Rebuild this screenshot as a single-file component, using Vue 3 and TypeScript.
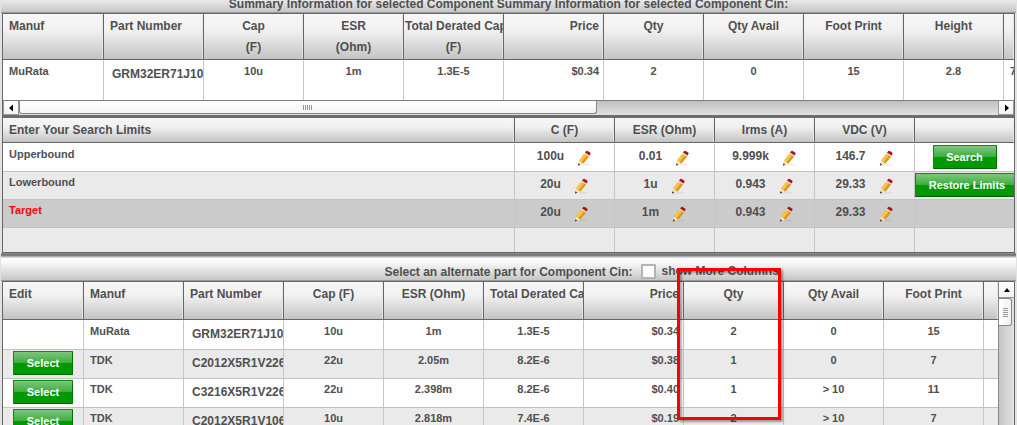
<script setup lang="ts">
import { ref } from 'vue'

type Align = 'left' | 'center' | 'right'

interface Column {
  label: string
  unit?: string
  align: Align
}

interface LimitRow {
  name: string
  values: string[]
  action?: string
  kind?: string
}

const summaryColumns: Column[] = [
  { label: 'Manuf', align: 'left' },
  { label: 'Part Number', align: 'left' },
  { label: 'Cap', unit: '(F)', align: 'center' },
  { label: 'ESR', unit: '(Ohm)', align: 'center' },
  { label: 'Total Derated Cap', unit: '(F)', align: 'center' },
  { label: 'Price', align: 'right' },
  { label: 'Qty', align: 'center' },
  { label: 'Qty Avail', align: 'center' },
  { label: 'Foot Print', align: 'center' },
  { label: 'Height', align: 'center' },
  { label: '', align: 'left' },
]
const summaryRow: string[] = ['MuRata', 'GRM32ER71J10', '10u', '1m', '1.3E-5', '$0.34', '2', '0', '15', '2.8', '7']

const limitColumns: string[] = ['C (F)', 'ESR (Ohm)', 'Irms (A)', 'VDC (V)']
const limitRows: LimitRow[] = [
  { name: 'Upperbound', values: ['100u', '0.01', '9.999k', '146.7'], action: 'Search' },
  { name: 'Lowerbound', values: ['20u', '1u', '0.943', '29.33'], action: 'Restore Limits' },
  { name: 'Target', values: ['20u', '1m', '0.943', '29.33'], kind: 'target' },
]

const partColumns: Column[] = [
  { label: 'Edit', align: 'left' },
  { label: 'Manuf', align: 'left' },
  { label: 'Part Number', align: 'left' },
  { label: 'Cap (F)', align: 'center' },
  { label: 'ESR (Ohm)', align: 'center' },
  { label: 'Total Derated Ca', align: 'center' },
  { label: 'Price', align: 'right' },
  { label: 'Qty', align: 'center' },
  { label: 'Qty Avail', align: 'center' },
  { label: 'Foot Print', align: 'center' },
  { label: '', align: 'left' },
]
const partRows: string[][] = [
  ['', 'MuRata', 'GRM32ER71J10', '10u', '1m', '1.3E-5', '$0.34', '2', '0', '15', ''],
  ['Select', 'TDK', 'C2012X5R1V226', '22u', '2.05m', '8.2E-6', '$0.38', '1', '0', '7', ''],
  ['Select', 'TDK', 'C3216X5R1V226', '22u', '2.398m', '8.2E-6', '$0.40', '1', '> 10', '11', ''],
  ['Select', 'TDK', 'C2012X5R1V106', '10u', '2.818m', '7.4E-6', '$0.19', '2', '> 10', '7', ''],
]

const showMore = ref(false)
</script>

<template>
  <main class="page">
    <section class="panel panel-summary">
      <div class="title">
        <h2 class="title-text">Summary Information for selected Component Summary Information for selected Component Cin:</h2>
      </div>
      <div class="frame">
        <table class="grid summary">
          <colgroup>
            <col v-for="i in 10" :key="i" class="col-std" />
            <col />
          </colgroup>
          <thead>
            <tr>
              <th v-for="(c, i) in summaryColumns" :key="i" :class="[c.align, { tight: c.unit }]">
                {{ c.label }}<template v-if="c.unit"><br />{{ c.unit }}</template>
              </th>
            </tr>
          </thead>
          <tbody>
            <tr>
              <td v-for="(v, i) in summaryRow" :key="i" :class="[summaryColumns[i].align, { part: i === 1 }]">{{ v }}</td>
            </tr>
          </tbody>
        </table>
        <div class="hscroll">
          <button class="arrow" type="button" aria-label="Scroll left">
            <svg width="5" height="8" viewBox="0 0 5 8"><path d="M0 4 4 0.5v7z" /></svg>
          </button>
          <div class="track">
            <div class="thumb"><i v-for="i in 5" :key="i"></i></div>
          </div>
          <button class="arrow" type="button" aria-label="Scroll right">
            <svg width="5" height="8" viewBox="0 0 5 8"><path d="M5 4 1 0.5v7z" /></svg>
          </button>
        </div>
        <table class="grid limits">
          <colgroup>
            <col />
            <col v-for="i in 5" :key="i" class="col-std" />
          </colgroup>
          <thead>
            <tr>
              <th class="left">Enter Your Search Limits</th>
              <th v-for="c in limitColumns" :key="c" class="center">{{ c }}</th>
              <th></th>
            </tr>
          </thead>
          <tbody>
            <tr v-for="row in limitRows" :key="row.name" :class="row.kind">
              <td class="left name">{{ row.name }}</td>
              <td v-for="(v, i) in row.values" :key="i" class="value">
                <div class="editable">
                  <span>{{ v }}</span>
                  <button class="pencil" type="button" :aria-label="`Edit ${row.name} ${limitColumns[i]}`">
                    <svg width="16" height="16" viewBox="0 0 16 16">
                      <path d="M4 15.500h9l1-1.500-6-.5z" fill="#888" opacity=".15" />
                      <path d="M3 10.600 7.300 13.400 4.200 15 2.200 15.600z" fill="#f6e4c4" />
                      <path d="M2.400 13.200 4.300 14.500 2 15.800z" fill="#2c2c2c" />
                      <path d="M3 10.600 8.300 3.400 13 6.400 7.300 13.500z" fill="#f0b62e" />
                      <path d="M5.800 12.500 11.500 5.400 13 6.400 7.300 13.500z" fill="#d7951a" />
                      <path d="M3.600 10.900 8.900 3.900 10.100 4.600 4.800 11.700z" fill="#f9cd55" />
                      <path d="M8.300 3.400 9.400 2 14 5 13 6.400z" fill="#e1e3e6" />
                      <path d="M9 2.500 10.300 1Q10.900.4 11.700.9L14.200 2.600Q14.900 3.200 14.400 4L13.500 5.400z" fill="#ae1220" />
                    </svg>
                  </button>
                </div>
              </td>
              <td class="action">
                <button v-if="row.action" type="button" class="btn" :class="row.action === 'Search' ? 'search' : 'restore'">{{ row.action }}</button>
              </td>
            </tr>
            <tr class="filler">
              <td v-for="i in 6" :key="i"></td>
            </tr>
          </tbody>
        </table>
      </div>
    </section>

    <section class="panel">
      <div class="title">
        <h2 class="title-text">Select an alternate part for Component Cin:</h2>
        <label class="more"><input v-model="showMore" type="checkbox" />show More Columns</label>
      </div>
      <div class="frame split">
        <table class="grid parts">
          <colgroup>
            <col class="col-edit" />
            <col v-for="i in 9" :key="i" class="col-std" />
            <col />
          </colgroup>
          <thead>
            <tr>
              <th v-for="(c, i) in partColumns" :key="i" :class="c.align">{{ c.label }}</th>
            </tr>
          </thead>
          <tbody>
            <tr v-for="(row, r) in partRows" :key="r">
              <td v-for="(v, i) in row" :key="i" :class="i === 0 ? 'action' : [partColumns[i].align, { part: i === 2 }]">
                <button v-if="i === 0 && v" type="button" class="btn select">{{ v }}</button>
                <template v-else>{{ v }}</template>
              </td>
            </tr>
          </tbody>
        </table>
        <div class="vscroll">
          <button class="arrow" type="button" aria-label="Scroll up">
            <svg width="6" height="4" viewBox="0 0 6 4"><path d="M3 0 6 4H0z" /></svg>
          </button>
          <div class="thumb"><i v-for="i in 5" :key="i"></i></div>
        </div>
      </div>
      <div class="highlight"></div>
    </section>
  </main>
</template>

<style>
body {
  margin: 0;
  background: #fff;
}
</style>

<style scoped>
.page {
  box-sizing: border-box;
  height: 100vh;
  overflow: hidden;
  padding: 0 1px;
  background: #e2e2e2;
  font-family: "Liberation Sans", Arial, sans-serif;
  font-weight: bold;
  font-size: 11px;
  line-height: 20px;
  color: #4f4f4f;
}
.panel {
  position: relative;
}
.panel-summary {
  margin-top: -10px;
  padding-bottom: 5px;
  background: linear-gradient(#999, #666 40%, #999 60%, #eee) bottom / 100% 5px no-repeat;
}
.title {
  box-sizing: border-box;
  display: grid;
  grid-template-columns: 1fr auto 1fr;
  align-items: center;
  height: 23px;
  margin: 0;
  padding-top: 2px;
  border-bottom: 1px solid #999;
  background: linear-gradient(#fff 10%, #c6c6c6);
  font-size: 12px;
  line-height: 20px;
}
.title-text {
  grid-column: 2;
  margin: 0;
  padding-top: 2px;
  font-size: 12px;
  line-height: 20px;
  white-space: nowrap;
}
.more {
  display: flex;
  align-items: center;
  gap: 6px;
  margin-left: 8px;
  white-space: nowrap;
}
.more input {
  appearance: none;
  box-sizing: border-box;
  width: 15px;
  height: 15px;
  margin: 0;
  border: 2px solid #b4b4b4;
  border-radius: 1px;
  background: #fff;
}
.more input:checked {
  background: #4f4f4f;
}
.frame {
  margin: 0 1px;
  border: 1px solid #666;
  background: #fff;
  overflow: hidden;
}
.grid {
  width: 100%;
  table-layout: fixed;
  border-collapse: separate;
  border-spacing: 0;
}
.col-std {
  width: 100px;
}
.col-edit {
  width: 80px;
}
th,
td {
  box-sizing: border-box;
  overflow: hidden;
  padding: 0 6px;
  vertical-align: top;
  white-space: nowrap;
}
th {
  padding-top: 2px;
  border-left: 1px solid #666;
  border-bottom: 1px solid #666;
  background: linear-gradient(#f6f6f6, #f2f2f2 35%, #c4c4c4);
  box-shadow: inset -1px 0 #e6e6e6;
  font-size: 12px;
  line-height: 21px;
}
td {
  border-top: 1px solid #c2c2c2;
  border-left: 1px solid #c6c6c6;
}
tr > :first-child {
  border-left: 0;
}
tbody tr:first-child td {
  border-top-color: #fff;
}
tbody tr:nth-child(even) td {
  background: #eaeaea;
}
.left {
  text-align: left;
}
.center {
  text-align: center;
}
.right {
  padding-right: 4px;
  text-align: right;
}
th.tight {
  padding-left: 1px;
  padding-right: 1px;
}
td.part {
  padding: 3px 0 0 8px;
  font-size: 12px;
  line-height: 21px;
}
.summary th {
  height: 46px;
}
.summary td {
  height: 40px;
}
.limits {
  border-top: 3px solid #6c6c6c;
}
.limits th {
  height: 25px;
}
.limits td {
  height: 28px;
}
.limits .filler td {
  height: 25px;
}
.limits tbody .target td {
  background: #cbcbcb;
}
.target .name {
  color: #f00;
}
td.value {
  padding: 2px 0 0;
  font-size: 12px;
  line-height: 21px;
}
.editable {
  display: flex;
  justify-content: center;
  gap: 12px;
}
.pencil {
  width: 16px;
  height: 21px;
  padding: 2px 0 0;
  border: 0;
  background: none;
}
.pencil svg {
  display: block;
}
td.action {
  padding: 1px 0 0;
  text-align: center;
  line-height: 0;
}
.btn {
  box-sizing: border-box;
  height: 24px;
  padding: 0;
  border: 1px solid #009000;
  border-bottom-color: #006400;
  border-right-color: #007400;
  border-radius: 1px;
  background: linear-gradient(#7cc87c, #3fab3f 50%, #009a00 50%, #009a00);
  color: #fff;
  font: bold 11px/20px "Liberation Sans", Arial, sans-serif;
}
.search {
  width: 64px;
}
.restore {
  width: 104px;
}
.select {
  width: 60px;
}
.parts th {
  height: 38px;
}
.parts td {
  height: 29px;
}
.split {
  display: flex;
}
.arrow {
  display: flex;
  align-items: center;
  justify-content: center;
  flex: none;
  padding: 0;
  border: 0;
  background: linear-gradient(#fff, #f2f2f2);
  fill: #000;
}
.hscroll {
  display: flex;
  height: 14px;
  border-top: 1px solid #808080;
}
.hscroll .arrow {
  width: 16px;
  border: 1px solid #999;
  border-top: 0;
}
.track {
  flex: 1;
  background: linear-gradient(#c0c0c0, #e2e2e2);
}
.hscroll .thumb {
  box-sizing: border-box;
  display: flex;
  align-items: center;
  justify-content: center;
  gap: 1px;
  width: 59%;
  height: 13px;
  border: 1px solid #858585;
  border-top: 0;
  border-radius: 0 0 3px 3px;
  background: linear-gradient(#fff, #f3f3f3);
}
.hscroll .thumb i {
  width: 1px;
  height: 5px;
  background: #999;
}
.vscroll {
  flex: none;
  box-sizing: border-box;
  width: 16px;
  border-left: 1px solid #888;
  background: linear-gradient(90deg, #c4c4c4, #e2e2e2);
}
.vscroll .arrow {
  box-sizing: border-box;
  width: 15px;
  height: 16px;
  border-bottom: 1px solid #999;
}
.vscroll .thumb {
  box-sizing: border-box;
  display: flex;
  flex-direction: column;
  align-items: center;
  justify-content: center;
  gap: 1px;
  width: 13px;
  height: 28px;
  border: 1px solid #858585;
  border-left: 0;
  border-radius: 0 3px 3px 0;
  background: linear-gradient(90deg, #fff, #f0f0f0);
}
.vscroll .thumb i {
  width: 5px;
  height: 1px;
  background: #999;
}
.highlight {
  position: absolute;
  top: 10px;
  left: 676px;
  box-sizing: border-box;
  width: 104px;
  height: 152px;
  border: 3px solid #f80000;
  box-shadow: 2px 2px 2px rgba(0, 0, 0, 0.35), inset 2px 2px 2px rgba(0, 0, 0, 0.3);
  pointer-events: none;
}
</style>
